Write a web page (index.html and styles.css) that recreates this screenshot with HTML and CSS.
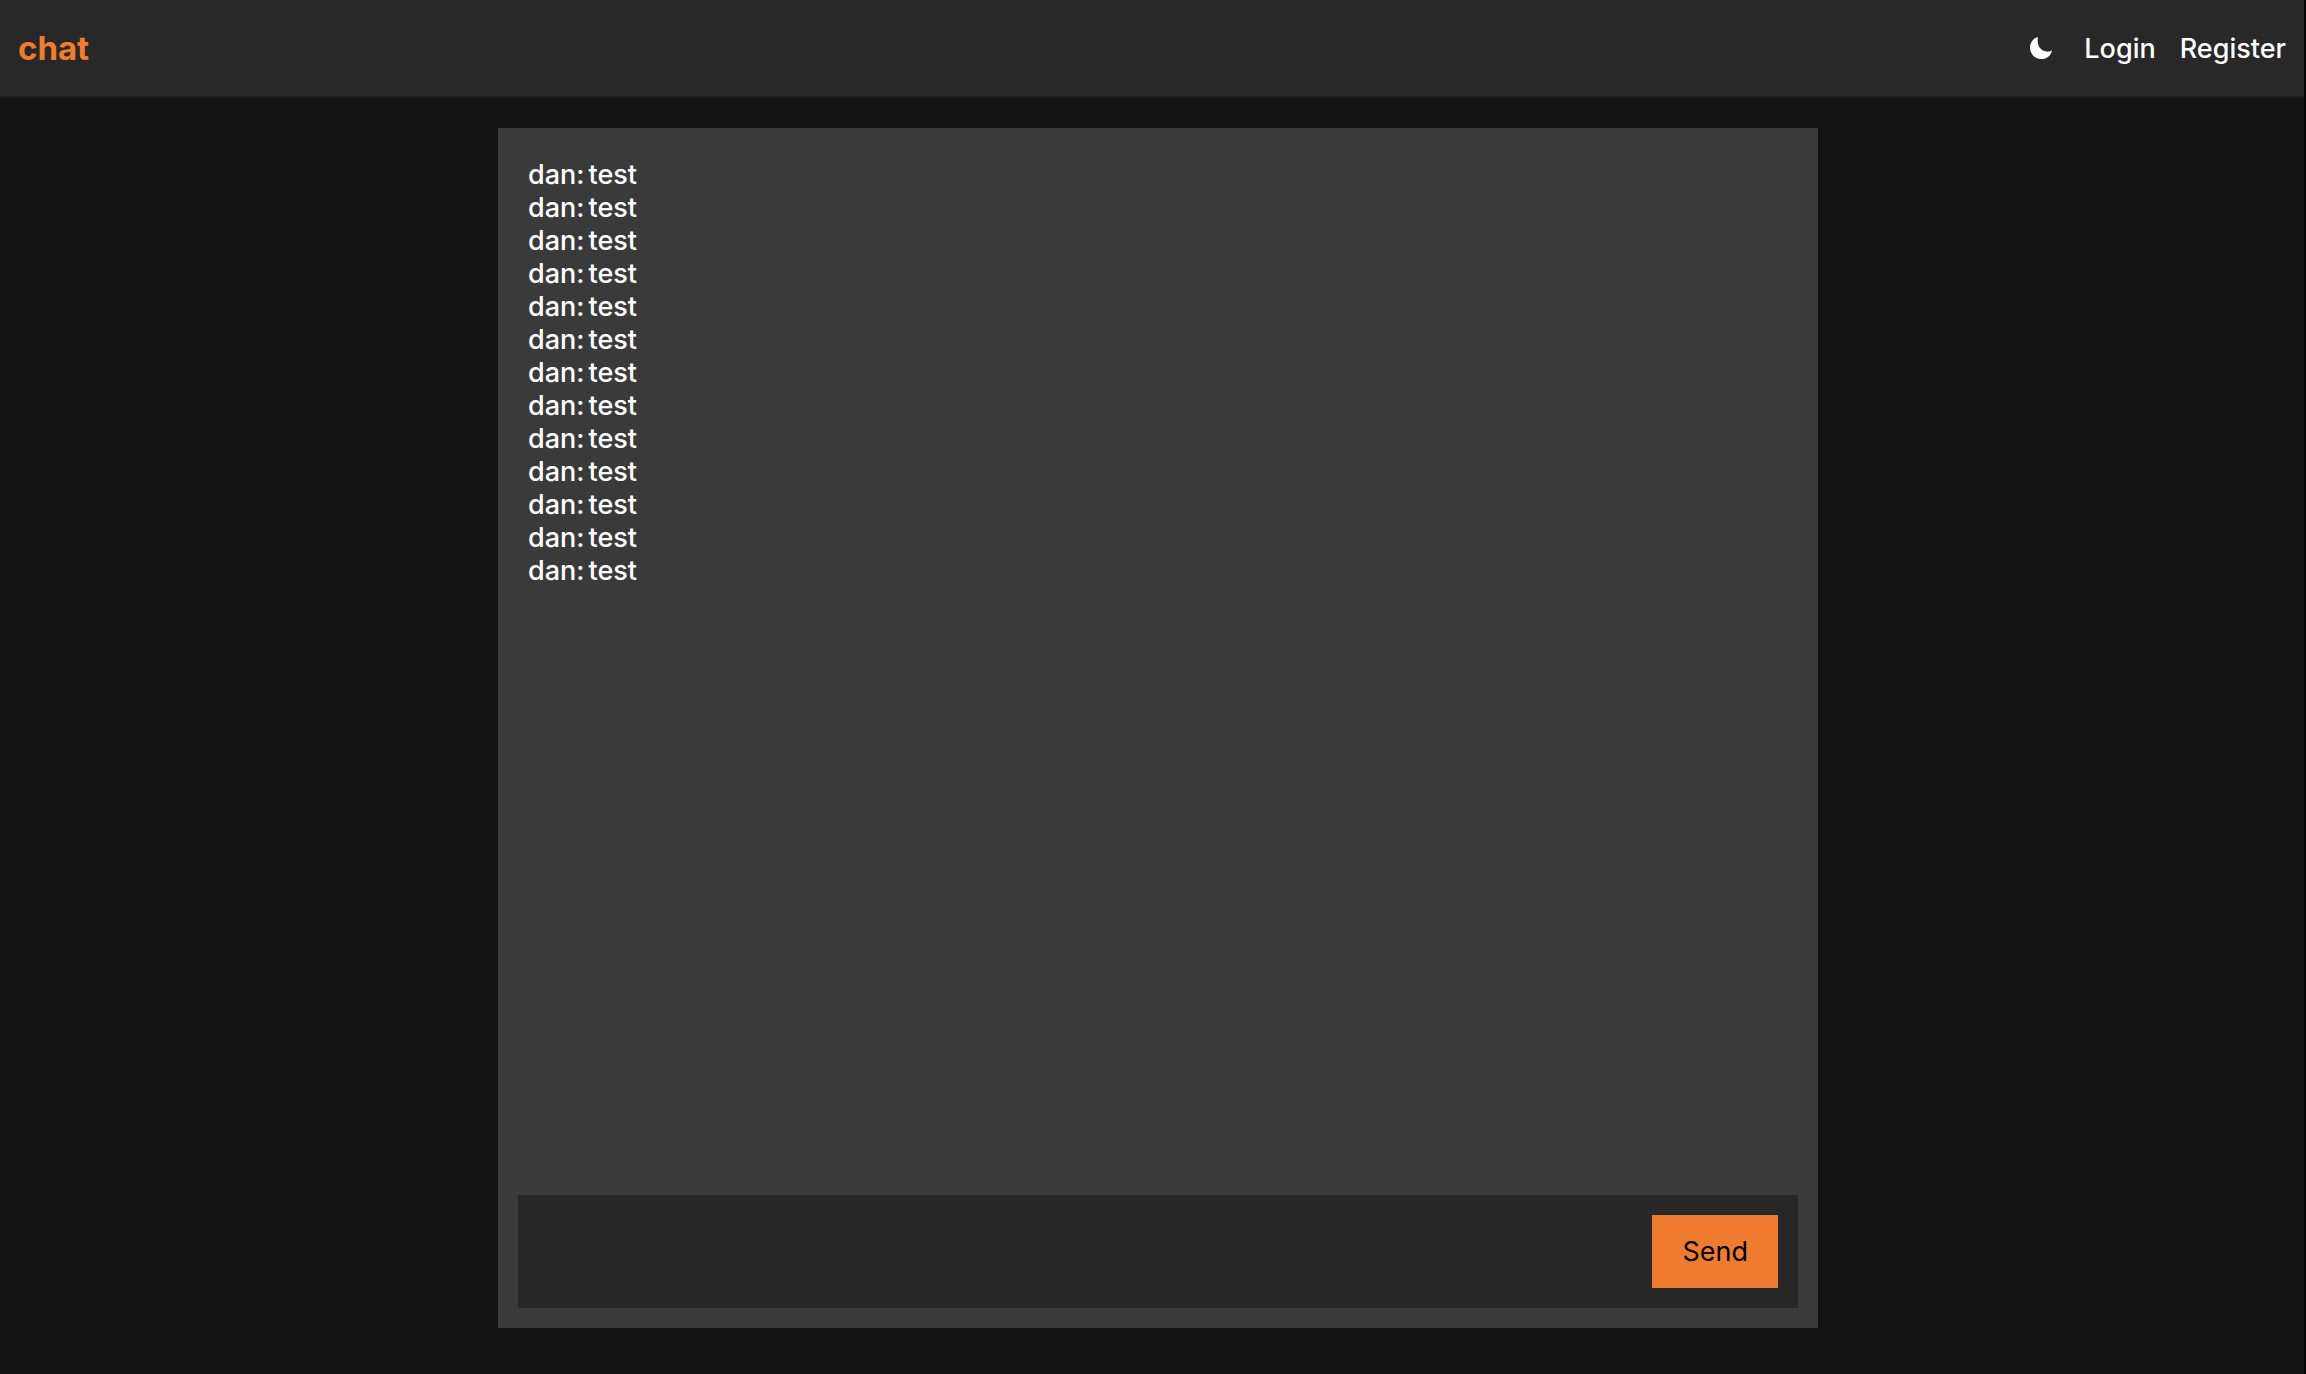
FILE: index.html
```html
<!DOCTYPE html>
<html lang="en">
<head>
<meta charset="utf-8">
<meta name="viewport" content="width=device-width, initial-scale=1">
<title>chat</title>
<link rel="stylesheet" href="styles.css">
</head>
<body>
<header class="navbar">
  <a class="brand" href="#">chat</a>
  <nav class="menu">
    <button class="theme-toggle" type="button" aria-label="Toggle theme">
      <svg class="moon" viewBox="0 0 22 22" aria-hidden="true"><path d="M8 0C3.200 1.200 0 5.500 0 10.600C0 17 5 22 11.400 22C16.800 22 21 18.600 22 13.200C20.500 14.400 18.500 14.900 16.300 14.500C9.500 13.400 6.500 7 8 0Z"/></svg>
    </button>
    <a class="menu-link" href="#">Login</a>
    <a class="menu-link" href="#">Register</a>
  </nav>
</header>
<main class="page">
  <section class="chat">
    <ul class="messages">
      <li class="message"><span>dan:</span> <span>test</span></li>
      <li class="message"><span>dan:</span> <span>test</span></li>
      <li class="message"><span>dan:</span> <span>test</span></li>
      <li class="message"><span>dan:</span> <span>test</span></li>
      <li class="message"><span>dan:</span> <span>test</span></li>
      <li class="message"><span>dan:</span> <span>test</span></li>
      <li class="message"><span>dan:</span> <span>test</span></li>
      <li class="message"><span>dan:</span> <span>test</span></li>
      <li class="message"><span>dan:</span> <span>test</span></li>
      <li class="message"><span>dan:</span> <span>test</span></li>
      <li class="message"><span>dan:</span> <span>test</span></li>
      <li class="message"><span>dan:</span> <span>test</span></li>
      <li class="message"><span>dan:</span> <span>test</span></li>
    </ul>
    <form class="composer">
      <input class="composer-input" type="text" aria-label="Message">
      <button class="send" type="submit">Send</button>
    </form>
  </section>
</main>
</body>
</html>
```
FILE: styles.css
```css
* {
  box-sizing: border-box;
}

body {
  display: flex;
  flex-direction: column;
  min-height: 100vh;
  margin: 0;
  border-right: 2px solid #040404;
  background: #131313;
  color: #fff;
  font-family: Inter, "Liberation Sans", sans-serif;
  font-size: 27px;
  font-weight: 500;
  line-height: 33px;
}

a {
  color: inherit;
  text-decoration: none;
}

.navbar {
  display: flex;
  align-items: center;
  justify-content: space-between;
  height: 98px;
  padding: 0 18px;
  border-bottom: 2px solid #202020;
  background: #282828;
}

.brand {
  color: #f07c30;
  font-size: 33px;
  font-weight: 700;
}

.menu {
  display: flex;
  align-items: center;
  gap: 24px;
}

.theme-toggle {
  display: flex;
  margin: 0 8px 0 0;
  padding: 0;
  border: 0;
  background: none;
}

.moon {
  width: 22px;
  height: 22px;
  fill: #fff;
}

.page {
  display: flex;
  flex: 1;
  justify-content: center;
  padding: 30px 0 46px 12px;
}

.chat {
  display: flex;
  flex-direction: column;
  width: 100%;
  max-width: 1320px;
  padding: 20px;
  background: #3a3a3a;
}

.messages {
  flex: 1;
  margin: 0;
  padding: 10px;
  list-style: none;
}

.message {
  display: flex;
  gap: 4px;
}

.composer {
  display: flex;
  padding: 20px;
  background: #272727;
}

.composer-input {
  flex: 1;
  min-width: 0;
  border: 0;
  outline: 0;
  background: transparent;
  color: inherit;
  font: inherit;
}

.send {
  padding: 20px 30px;
  border: 0;
  background: #ee7b30;
  color: #000;
  font: inherit;
  font-weight: 400;
}
```
